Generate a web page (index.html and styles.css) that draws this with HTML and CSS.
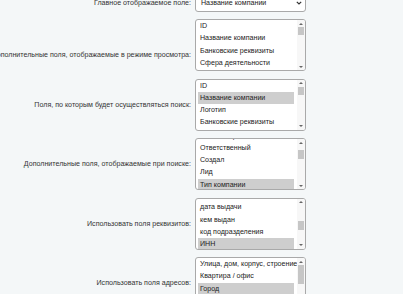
FILE: index.html
```html
<!DOCTYPE html>
<html lang="ru">

<head>
    <meta charset="UTF-8">
    <meta name="viewport" content="width=device-width,initial-scale=1.0">
    <title>Настройки сущности</title>
    <link rel="stylesheet" href="styles.css">
</head>

<body>
    <div class="settings">
        <div class="row">
            <div class="label">Главное отображаемое поле:</div>
            <div class="dropdown">
                <span>Название компании</span>
                <svg class="chevron" width="6" height="4" viewBox="0 0 6 4">
                    <path d="M0.8 0.8 L3 3 L5.2 0.8" fill="none" stroke="#333" stroke-width="1.2" />
                </svg>
            </div>
        </div>

        <div class="row">
            <div class="label label-low">Дополнительные поля, отображаемые в режиме просмотра:</div>
            <div class="listbox">
                <div class="options">
                    <div class="option">ID</div>
                    <div class="option">Название компании</div>
                    <div class="option">Банковские реквизиты</div>
                    <div class="option">Сфера деятельности</div>
                    <div class="option">Тип компании</div>
                </div>
                <div class="scrollbar">
                    <div class="arrow up"></div>
                    <div class="track"><div class="thumb"></div></div>
                    <div class="arrow down"></div>
                </div>
            </div>
        </div>

        <div class="row">
            <div class="label">Поля, по которым будет осуществляться поиск:</div>
            <div class="listbox">
                <div class="options">
                    <div class="option">ID</div>
                    <div class="option selected">Название компании</div>
                    <div class="option">Логотип</div>
                    <div class="option">Банковские реквизиты</div>
                    <div class="option">Сфера деятельности</div>
                </div>
                <div class="scrollbar">
                    <div class="arrow up"></div>
                    <div class="track"><div class="thumb"></div></div>
                    <div class="arrow down"></div>
                </div>
            </div>
        </div>

        <div class="row">
            <div class="label">Дополнительные поля, отображаемые при поиске:</div>
            <div class="listbox">
                <div class="options scrolled">
                    <div class="option">Комментарий</div>
                    <div class="option">Ответственный</div>
                    <div class="option">Создал</div>
                    <div class="option">Лид</div>
                    <div class="option selected">Тип компании</div>
                </div>
                <div class="scrollbar">
                    <div class="arrow up"></div>
                    <div class="track"><div class="thumb thumb-mid"></div></div>
                    <div class="arrow down"></div>
                </div>
            </div>
        </div>

        <div class="row">
            <div class="label">Использовать поля реквизитов:</div>
            <div class="listbox">
                <div class="options scrolled">
                    <div class="option">Номер</div>
                    <div class="option">дата выдачи</div>
                    <div class="option">кем выдан</div>
                    <div class="option">код подразделения</div>
                    <div class="option selected">ИНН</div>
                </div>
                <div class="scrollbar">
                    <div class="arrow up"></div>
                    <div class="track"><div class="thumb thumb-low"></div></div>
                    <div class="arrow down"></div>
                </div>
            </div>
        </div>

        <div class="row">
            <div class="label">Использовать поля адресов:</div>
            <div class="listbox">
                <div class="options">
                    <div class="option">Улица, дом, корпус, строение</div>
                    <div class="option">Квартира / офис</div>
                    <div class="option selected">Город</div>
                    <div class="option">Район</div>
                </div>
                <div class="scrollbar">
                    <div class="arrow up"></div>
                    <div class="track"><div class="thumb thumb-long"></div></div>
                    <div class="arrow down"></div>
                </div>
            </div>
        </div>
    </div>
</body>

</html>
```

FILE: styles.css
```css
* {
    margin: 0;
    padding: 0;
    box-sizing: border-box;
}

body {
    background-color: #f4f7f8;
    font-family: 'Liberation Sans', Arial, sans-serif;
    font-size: 7.1px;
    color: #333;
    overflow: hidden;
}

.settings {
    display: flex;
    flex-direction: column;
    gap: 7.5px;
    margin-top: -5.5px;
}

.row {
    display: flex;
    align-items: center;
}

.label {
    width: 191px;
    flex-shrink: 0;
    display: flex;
    justify-content: flex-end;
    white-space: nowrap;
    margin-right: 4px;
    color: #333;
}

.label-low {
    padding-top: 20px;
}

.dropdown {
    width: 111px;
    height: 17px;
    display: flex;
    align-items: center;
    justify-content: space-between;
    padding: 0 3px 0 5px;
    background-color: #fff;
    border: 1px solid #a9a9a9;
    border-radius: 3px;
    color: #222;
}

.chevron {
    display: block;
}

.listbox {
    width: 111px;
    height: 52px;
    display: flex;
    background-color: #fff;
    border: 1px solid #a9a9a9;
    border-radius: 3px;
    overflow: hidden;
}

.options {
    flex: 1;
    min-width: 0;
    padding: 0 3px 0 2px;
    overflow: hidden;
}

.options.scrolled {
    margin-top: -9.5px;
}

.option {
    height: 12.33px;
    line-height: 12.33px;
    padding-left: 2px;
    white-space: nowrap;
    color: #222;
}

.option.selected {
    background-color: #cecece;
}

.scrollbar {
    width: 8px;
    flex-shrink: 0;
    display: flex;
    flex-direction: column;
    background-color: #f7f7f7;
}

.arrow {
    height: 7px;
    display: flex;
    align-items: center;
    justify-content: center;
}

.arrow::before {
    content: "";
    border-left: 2px solid transparent;
    border-right: 2px solid transparent;
}

.arrow.up::before {
    border-bottom: 2px solid #666;
}

.arrow.down::before {
    border-top: 2px solid #666;
}

.track {
    flex: 1;
    padding: 0 1px;
}

.thumb {
    height: 8px;
    background-color: #c6c6c6;
}

.thumb-mid {
    margin-top: 4px;
    height: 8.5px;
}

.thumb-low {
    margin-top: 15.5px;
    height: 8.5px;
}

.thumb-long {
    height: 19px;
}
```
